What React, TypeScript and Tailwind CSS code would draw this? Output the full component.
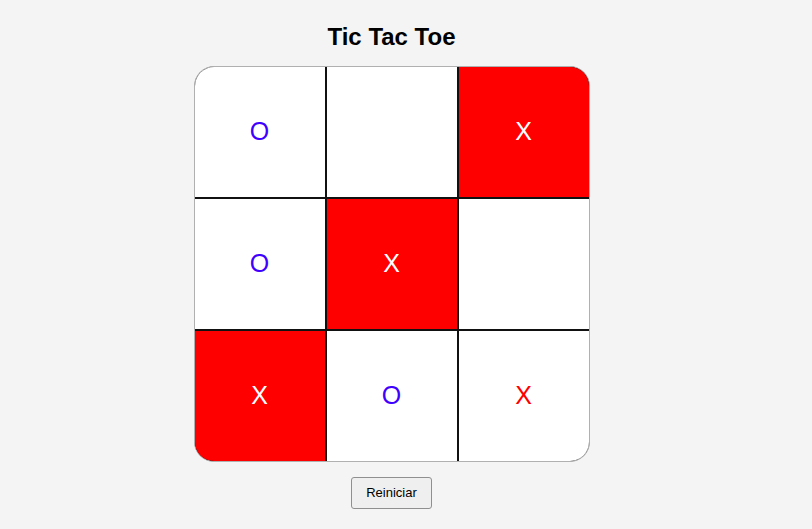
import React, { useState } from 'react';

type Cell = 'X' | 'O' | null;

const initial: Cell[] = ['O', null, 'X', 'O', 'X', null, 'X', 'O', 'X'];
// cells painted red in the reference
const redCells = [2, 4, 6];

export default function App() {
    const [board, setBoard] = useState<Cell[]>(initial);

    return (
        <div
            className="min-h-screen w-full bg-[#f4f4f4] pr-[29px]"
            style={{ fontFamily: '"Liberation Sans", Arial, sans-serif' }}
        >
            <div className="flex flex-col items-center pt-[23px]">
                <h1 className="text-[24px] leading-[28px] font-bold text-black">Tic Tac Toe</h1>

                {/* Board */}
                <div className="mt-[15px] w-[396px] h-[396px] grid grid-cols-3 gap-[2px] bg-[#111] border border-[#b0b0b0] rounded-[20px] overflow-hidden">
                    {board.map((c, i) => {
                        const red = redCells.includes(i);
                        return (
                            <button
                                key={i}
                                type="button"
                                className={
                                    'flex items-center justify-center text-[25px] ' +
                                    (red ? 'bg-[#ff0000] text-white' : 'bg-white ') +
                                    (!red && c === 'O' ? 'text-[#4000ff]' : '') +
                                    (!red && c === 'X' ? 'text-[#ff0000]' : '')
                                }
                            >
                                {c}
                            </button>
                        );
                    })}
                </div>

                <button
                    type="button"
                    onClick={() => setBoard(initial)}
                    className="mt-[15px] w-[81px] h-[32px] text-[13px] text-black bg-[#efefef] border border-[#8f8f8f] rounded-[3px]"
                >
                    Reiniciar
                </button>
            </div>
        </div>
    );
}
